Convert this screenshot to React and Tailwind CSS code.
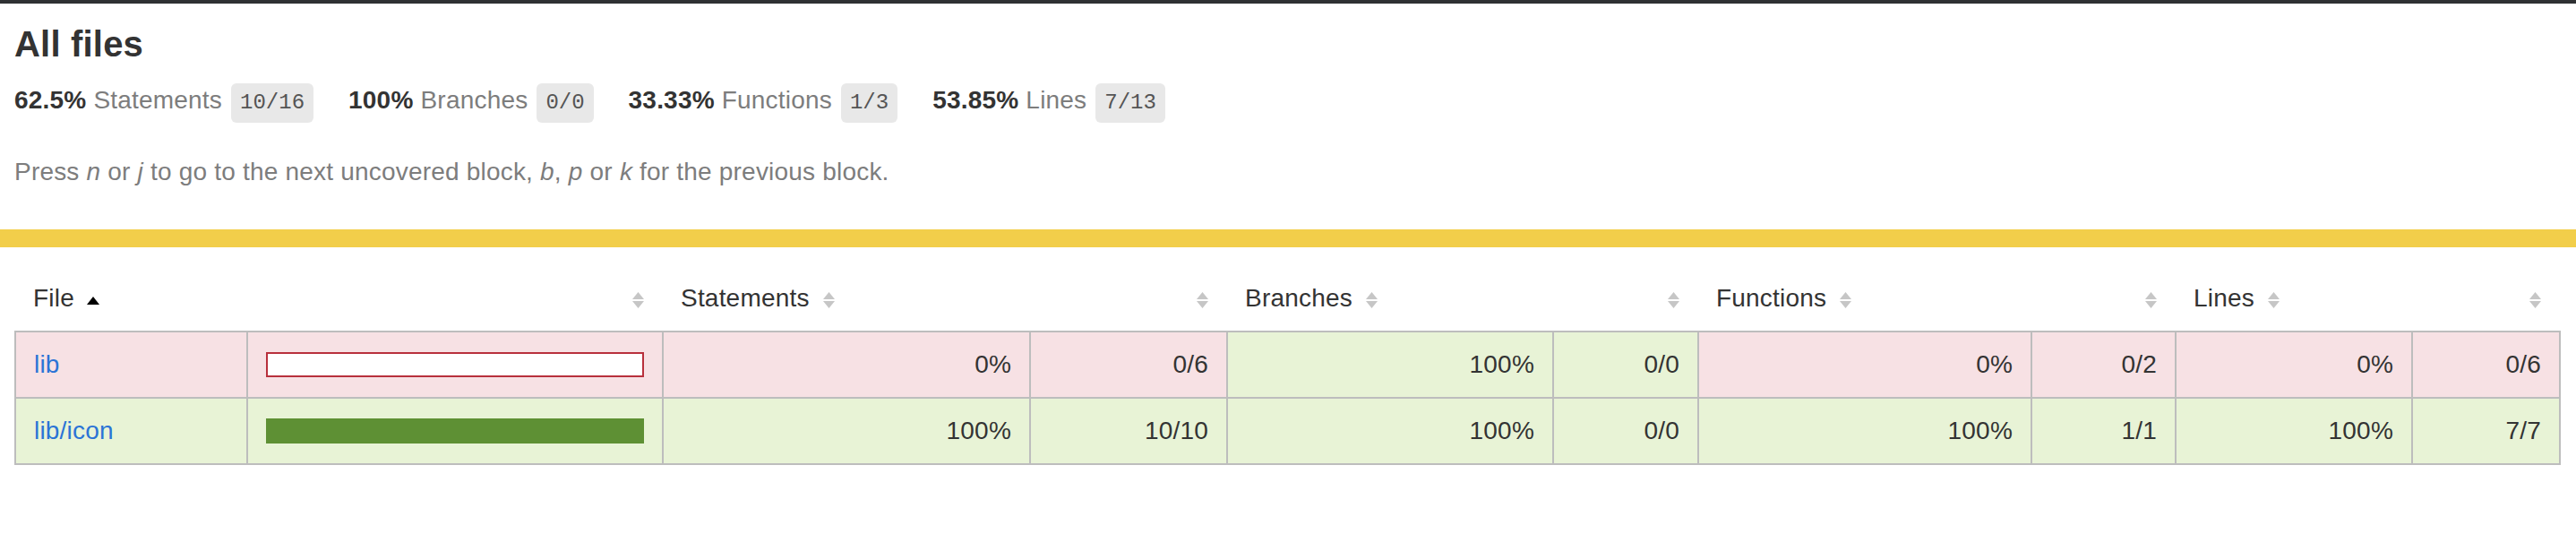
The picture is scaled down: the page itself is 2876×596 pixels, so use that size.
import React from "react";

const rows = [
  {
    file: "lib",
    pct: 0,
    cls: "low",
    cells: [
      { pct: "0%", abs: "0/6", cls: "low" },
      { pct: "100%", abs: "0/0", cls: "high" },
      { pct: "0%", abs: "0/2", cls: "low" },
      { pct: "0%", abs: "0/6", cls: "low" },
    ],
  },
  {
    file: "lib/icon",
    pct: 100,
    cls: "high",
    cells: [
      { pct: "100%", abs: "10/10", cls: "high" },
      { pct: "100%", abs: "0/0", cls: "high" },
      { pct: "100%", abs: "1/1", cls: "high" },
      { pct: "100%", abs: "7/7", cls: "high" },
    ],
  },
];

const stats = [
  { pct: "62.5%", label: "Statements", frac: "10/16" },
  { pct: "100%", label: "Branches", frac: "0/0" },
  { pct: "33.33%", label: "Functions", frac: "1/3" },
  { pct: "53.85%", label: "Lines", frac: "7/13" },
];

const bg = { low: "bg-[#f7e1e4]", high: "bg-[#e8f3d6]" };

function Sorter({ sorted }) {
  if (sorted) {
    return (
      <svg className="inline-block ml-[14px]" width="14" height="20" viewBox="0 0 14 20">
        <polygon points="0,15 7,6 14,15" fill="#000" />
      </svg>
    );
  }
  return (
    <svg className="inline-block ml-[14px]" width="15" height="20" viewBox="0 0 15 20">
      <polygon points="1,9 7.5,1 14,9" fill="#c6c6c6" />
      <polygon points="1,11 7.5,19 14,11" fill="#c6c6c6" />
    </svg>
  );
}

function Chart({ pct, cls }) {
  const border = cls === "high" ? "border-[#5e9034]" : "border-[#b8303c]";
  const fill = cls === "high" ? "bg-[#5e9034]" : "bg-[#b8303c]";
  return (
    <div className={`flex h-[28px] border-2 ${border}`}>
      <div className={`h-full ${fill}`} style={{ width: `${pct}%` }} />
      <div className="h-full flex-1 bg-white" />
    </div>
  );
}

export default function App() {
  const th = "p-[20px] font-normal text-left whitespace-nowrap leading-[32px]";
  const td = "p-[20px] leading-[32px] border-r-2 border-[#bdbdbd]";

  return (
    <div className="min-h-screen bg-white text-[#333] text-[28px] tracking-[0.2px] font-['Liberation_Sans',Arial,sans-serif]">
      <div className="h-[4px] bg-[#2f3133]" />

      <div className="px-[16px] pt-[22px]">
        <h1 className="text-[40px] leading-[46px] font-bold">All files</h1>

        <div className="mt-[21px] flex items-baseline">
          {stats.map((s, i) => (
            <div key={s.label} className={`flex items-baseline ${i ? "ml-[39px]" : ""}`}>
              <span className="font-bold leading-[32px]">{s.pct}</span>
              <span className="ml-[8px] leading-[32px] text-[#7d7d7d]">{s.label}</span>
              <span className="ml-[10px] px-[10px] py-[8px] rounded-[6px] bg-[#e8e8e8] text-[#555] text-[24px] leading-[28px] tracking-normal font-['Liberation_Mono',monospace]">
                {s.frac}
              </span>
            </div>
          ))}
        </div>

        <p className="mt-[39px] leading-[32px] text-[#7d7d7d]">
          Press <em>n</em> or <em>j</em> to go to the next uncovered block, <em>b</em>,{" "}
          <em>p</em> or <em>k</em> for the previous block.
        </p>
      </div>

      <div className="mt-[48px] h-[20px] bg-[#f2ce4a]" />

      <div className="pl-[16px] mt-[21px]">
        <table className="table-fixed border-collapse w-[2841px]">
          <colgroup>
            <col className="w-[259px]" />
            <col className="w-[464px]" />
            <col className="w-[410px]" />
            <col className="w-[220px]" />
            <col className="w-[364px]" />
            <col className="w-[162px]" />
            <col className="w-[372px]" />
            <col className="w-[161px]" />
            <col className="w-[264px]" />
            <col className="w-[165px]" />
          </colgroup>
          <thead>
            <tr>
              <th className={th}>
                File
                <Sorter sorted />
              </th>
              <th className={`${th} text-right`}>
                <Sorter />
              </th>
              {["Statements", "Branches", "Functions", "Lines"].map((h) => (
                <React.Fragment key={h}>
                  <th className={th}>
                    {h}
                    <Sorter />
                  </th>
                  <th className={`${th} text-right`}>
                    <Sorter />
                  </th>
                </React.Fragment>
              ))}
            </tr>
          </thead>
          <tbody className="border-2 border-[#bdbdbd]">
            {rows.map((r) => (
              <tr key={r.file} className="border-b-2 border-[#bdbdbd]">
                <td className={`${td} ${bg[r.cls]} whitespace-nowrap`}>
                  <a href="#" className="text-[#2b74d6]">
                    {r.file}
                  </a>
                </td>
                <td className={`${td} ${bg[r.cls]}`}>
                  <Chart pct={r.pct} cls={r.cls} />
                </td>
                {r.cells.map((c, i) => (
                  <React.Fragment key={i}>
                    <td className={`${td} ${bg[c.cls]} text-right`}>{c.pct}</td>
                    <td className={`${td} ${bg[c.cls]} text-right ${i === 3 ? "border-r-0" : ""}`}>
                      {c.abs}
                    </td>
                  </React.Fragment>
                ))}
              </tr>
            ))}
          </tbody>
        </table>
      </div>
    </div>
  );
}
